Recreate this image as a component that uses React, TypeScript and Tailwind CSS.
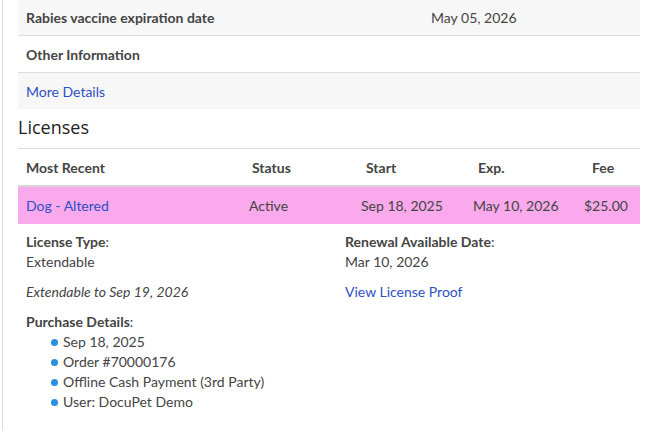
const LATO = "font-['Lato','Liberation_Sans',sans-serif]";

const PURCHASE = ['Sep 18, 2025', 'Order #70000176', 'Offline Cash Payment (3rd Party)', 'User: DocuPet Demo'];

function InfoRow({ label, value, grey }: { label: React.ReactNode; value?: string; grey?: boolean }) {
  return (
    <div className={`flex h-[37px] items-center border-b border-[#dddddd] ${grey ? 'bg-[#f7f7f7]' : 'bg-white'}`}>
      <div className="w-[320px] pl-2">{label}</div>
      <div className="flex-1 pl-[93px]">{value}</div>
    </div>
  );
}

export default function App() {
  return (
    <div className={`${LATO} h-[431px] w-[654px] overflow-hidden bg-white text-[14px] text-[#444444]`}>
      <div className="ml-[2px] h-full border-l border-[#dddddd] pl-[15px] pr-[14px]">
        <div className="-mt-px">
          <InfoRow grey label={<span className="font-bold">Rabies vaccine expiration date</span>} value="May 05, 2026" />
          <InfoRow label={<span className="font-bold">Other Information</span>} />
          <div className="flex h-9 items-center bg-[#f7f7f7] pl-2">
            <a className="text-[#2f4fc4]">More Details</a>
          </div>
        </div>

        <h2 className="mb-[3px] font-['Open_Sans',sans-serif] text-[18px] leading-[36px] text-[#222222]">Licenses</h2>

        <div className="border-t border-[#dddddd]">
          <div className="flex h-[38px] items-center border-b-2 border-[#d6d6d6] font-bold">
            <div className="w-[223px] pl-2">Most Recent</div>
            <div className="w-[112px] pl-[11px]">Status</div>
            <div className="w-[112px] pl-[13px]">Start</div>
            <div className="w-[111px] pl-[13px]">Exp.</div>
            <div className="flex-1 pl-[16px]">Fee</div>
          </div>
          <div className="flex h-[37px] items-center bg-[#f9a9ec]">
            <div className="w-[223px] pl-2 text-[#2f4fc4]">Dog - Altered</div>
            <div className="w-[112px] pl-2">Active</div>
            <div className="w-[112px] pl-2">Sep 18, 2025</div>
            <div className="w-[111px] pl-2">May 10, 2026</div>
            <div className="flex-1 pl-2">$25.00</div>
          </div>

          <div className="flex border-b border-[#dddddd] pb-[19px] pt-[8px] leading-5">
            <div className="w-[327px] pl-2">
              <div>
                <span className="font-bold">License Type</span>:
              </div>
              <div>Extendable</div>
              <div className="mt-[10px] italic">Extendable to Sep 19, 2026</div>
              <div className="mt-[10px]">
                <span className="font-bold">Purchase Details</span>:
              </div>
              <ul className="pl-[25px]">
                {PURCHASE.map((p) => (
                  <li key={p} className="flex items-center gap-[5px]">
                    <span className="h-[7px] w-[7px] rounded-full bg-[#2a8fdc]" />
                    {p}
                  </li>
                ))}
              </ul>
            </div>
            <div className="flex-1">
              <div>
                <span className="font-bold">Renewal Available Date</span>:
              </div>
              <div>Mar 10, 2026</div>
              <a className="mt-[10px] block text-[#2f4fc4]">View License Proof</a>
            </div>
          </div>
        </div>
      </div>
    </div>
  );
}
